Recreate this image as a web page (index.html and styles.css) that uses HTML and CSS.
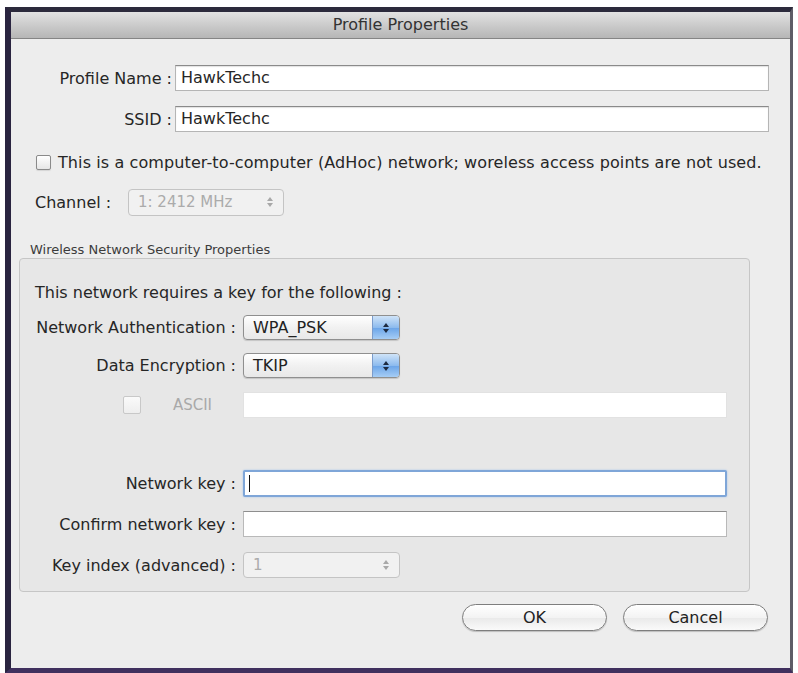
FILE: index.html
```html
<!DOCTYPE html>
<html lang="en">
  <head>
    <meta charset="UTF-8" />
    <meta name="viewport" content="width=device-width, initial-scale=1.0" />
    <title>Profile Properties</title>
    <link rel="stylesheet" href="styles.css">
  </head>
  <body>
    <div class="window">
      <div class="titlebar">Profile Properties</div>
      <div class="content">
        <div class="field-row">
          <span class="label">Profile Name :</span>
          <div class="textbox">HawkTechc</div>
        </div>
        <div class="field-row ssid">
          <span class="label">SSID :</span>
          <div class="textbox">HawkTechc</div>
        </div>

        <div class="check-row">
          <span class="checkbox"></span>
          <span>This is a computer-to-computer (AdHoc) network; woreless access points are not used.</span>
        </div>

        <div class="channel-row">
          <span class="channel-label">Channel :</span>
          <div class="popup disabled">
            <span class="popup-text">1: 2412 MHz</span>
            <span class="stepper">
              <svg width="8" height="14" viewBox="0 0 8 14"><polygon points="4,2 7,6 1,6" /><polygon points="1,8 7,8 4,12" /></svg>
            </span>
          </div>
        </div>

        <div class="group-title">Wireless Network Security Properties</div>
        <div class="group">
          <div class="group-note">This network requires a key for the following :</div>

          <div class="sec-row auth">
            <span class="sec-label">Network Authentication :</span>
            <div class="popup">
              <span class="popup-text">WPA_PSK</span>
              <span class="stepper blue">
                <svg width="8" height="14" viewBox="0 0 8 14"><polygon points="4,2 7,6 1,6" /><polygon points="1,8 7,8 4,12" /></svg>
              </span>
            </div>
          </div>

          <div class="sec-row enc">
            <span class="sec-label">Data Encryption :</span>
            <div class="popup">
              <span class="popup-text">TKIP</span>
              <span class="stepper blue">
                <svg width="8" height="14" viewBox="0 0 8 14"><polygon points="4,2 7,6 1,6" /><polygon points="1,8 7,8 4,12" /></svg>
              </span>
            </div>
          </div>

          <div class="sec-row ascii">
            <span class="sec-label ascii-label">
              <span class="checkbox disabled"></span>
              <span class="muted">ASCII</span>
            </span>
            <div class="keybox faint"></div>
          </div>

          <div class="sec-row netkey">
            <span class="sec-label">Network key :</span>
            <div class="keybox focused"><span class="caret"></span></div>
          </div>

          <div class="sec-row confirm">
            <span class="sec-label">Confirm network key :</span>
            <div class="keybox"></div>
          </div>

          <div class="sec-row keyindex">
            <span class="sec-label">Key index (advanced) :</span>
            <div class="popup disabled">
              <span class="popup-text">1</span>
              <span class="stepper">
                <svg width="8" height="14" viewBox="0 0 8 14"><polygon points="4,2 7,6 1,6" /><polygon points="1,8 7,8 4,12" /></svg>
              </span>
            </div>
          </div>
        </div>

        <div class="buttons">
          <button class="btn">OK</button>
          <button class="btn">Cancel</button>
        </div>
      </div>
    </div>
  </body>
</html>
```

FILE: styles.css
```css
body {
  margin: 0;
  background-color: #fff;
  font-family: "DejaVu Sans", "Noto Sans", sans-serif;
  font-size: 16px;
  color: #262626;
}

.window {
  margin: 7px 0 0 5px;
  width: 779px;
  height: 656px;
  border-top: 5px solid #2c2a3c;
  border-left: 6px solid #2a2440;
  border-right: 3px solid #5e5c66;
  border-bottom: 5px solid #40305e;
  background-color: #ededed;
}

.titlebar {
  height: 26px;
  line-height: 26px;
  text-align: center;
  color: #333;
  background: linear-gradient(#e2e2e2, #c7c7c7 60%, #b6b6b6);
  border-bottom: 1px solid #858585;
}

.content {
  padding-top: 26px;
}

/* top fields */
.field-row {
  display: flex;
  align-items: center;
  height: 26px;
}

.field-row.ssid {
  margin-top: 15px;
}

.label {
  width: 161px;
  text-align: right;
  margin-right: 3px;
}

.textbox {
  box-sizing: border-box;
  width: 594px;
  height: 26px;
  line-height: 24px;
  padding-left: 5px;
  background-color: #fff;
  border: 1px solid #b5b5b5;
  border-top-color: #8a8a8a;
  box-shadow: inset 0 1px 1px rgba(0, 0, 0, 0.12);
}

.check-row {
  display: flex;
  align-items: center;
  height: 18px;
  margin-top: 21px;
  padding-left: 25px;
  letter-spacing: 0.1px;
}

.checkbox {
  box-sizing: border-box;
  width: 15px;
  height: 15px;
  margin-right: 7px;
  border: 1px solid #8a8a8a;
  border-radius: 2px;
  background: linear-gradient(#fff, #e6e6e6);
  box-shadow: 0 1px 1px rgba(0, 0, 0, 0.1);
}

.checkbox.disabled {
  width: 18px;
  height: 18px;
  border-color: #c8c8c8;
  background: linear-gradient(#fafafa, #eeeeee);
  box-shadow: none;
}

.channel-row {
  display: flex;
  align-items: center;
  height: 26px;
  margin-top: 18px;
  padding-left: 24px;
}

.channel-label {
  width: 93px;
}

/* popup buttons */
.popup {
  box-sizing: border-box;
  display: flex;
  align-items: center;
  width: 157px;
  height: 25px;
  border: 1px solid #8f8f8f;
  border-radius: 4px;
  background: linear-gradient(#ffffff, #f1f1f1 50%, #e8e8e8);
  box-shadow: 0 1px 1px rgba(0, 0, 0, 0.15);
  overflow: hidden;
}

.channel-row .popup {
  width: 156px;
  height: 27px;
}

.popup-text {
  flex: 1;
  padding-left: 9px;
  color: #222;
}

.stepper {
  display: flex;
  align-items: center;
  justify-content: center;
  width: 26px;
  align-self: stretch;
}

.stepper svg {
  fill: #3a3a3a;
}

.stepper.blue {
  border-left: 1px solid #7b9ccb;
  background: linear-gradient(#cfe3f8, #8dbbee 50%, #6aa4e8 51%, #a6cdf5);
}

.stepper.blue svg {
  fill: #1d2a40;
}

.popup.disabled {
  border-color: #c4c4c4;
  background: #f1f1f1;
  box-shadow: none;
}

.popup.disabled .popup-text {
  color: #ababab;
  font-size: 15px;
}

.popup.disabled .stepper svg {
  fill: #a8a8a8;
}

/* security group */
.group-title {
  margin-top: 28px;
  padding-left: 19px;
  height: 13px;
  line-height: 13px;
  font-size: 13px;
  color: #3c3c3c;
  margin-bottom: 2px;
}

.group {
  box-sizing: border-box;
  width: 731px;
  margin-left: 8px;
  padding: 24px 0 13px 15px;
  border: 1px solid #c6c6c6;
  border-radius: 4px;
  background-color: #e7e7e7;
}

.group-note {
  height: 20px;
  line-height: 20px;
}

.sec-row {
  display: flex;
  align-items: center;
  height: 26px;
}

.sec-label {
  width: 201px;
  margin-right: 7px;
  text-align: right;
}

.sec-row.auth {
  height: 25px;
  margin-top: 12px;
}

.sec-row.enc {
  height: 25px;
  margin-top: 13px;
}

.sec-row.ascii {
  margin-top: 14px;
}

.ascii-label {
  box-sizing: border-box;
  display: flex;
  align-items: center;
  justify-content: flex-end;
  padding-right: 24px;
}

.ascii-label .checkbox {
  margin-right: 32px;
}

.muted {
  color: #a9a9a9;
  font-size: 15px;
}

.keybox {
  box-sizing: border-box;
  display: flex;
  align-items: center;
  width: 484px;
  height: 26px;
  background-color: #fff;
  border: 1px solid #b9b9b9;
  border-top-color: #8e8e8e;
}

.keybox.faint {
  border-color: #e2e2e2;
}

.sec-row.netkey {
  height: 27px;
  margin-top: 52px;
}

.keybox.focused {
  height: 27px;
  border: 2px solid #7fa6d8;
  border-radius: 2px;
  box-shadow: 0 0 2px #9fc1ea;
}

.caret {
  width: 1px;
  height: 17px;
  margin-left: 4px;
  background-color: #111;
}

.sec-row.confirm {
  margin-top: 14px;
}

.sec-row.keyindex {
  margin-top: 15px;
}

.sec-row.keyindex .popup {
  height: 26px;
}

/* dialog buttons */
.buttons {
  display: flex;
  justify-content: flex-end;
  gap: 16px;
  margin-top: 12px;
  padding-right: 22px;
}

.btn {
  width: 145px;
  height: 27px;
  padding: 0;
  font-family: "DejaVu Sans", "Noto Sans", sans-serif;
  font-size: 16px;
  color: #222;
  border: 1px solid #7e7e7e;
  border-radius: 14px;
  background: linear-gradient(#ffffff, #f3f3f3 50%, #e9e9e9 51%, #fafafa);
  box-shadow: 0 1px 1px rgba(0, 0, 0, 0.2);
}
```
